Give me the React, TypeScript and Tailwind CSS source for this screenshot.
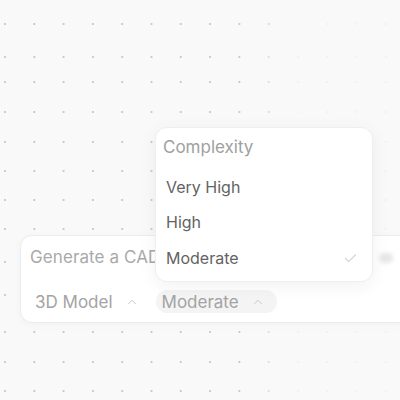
import React from "react";
import { ChevronUp, Check } from "lucide-react";

const rows = [24, 57, 82, 112, 142, 171, 200, 229, 262, 295, 332, 362, 391];
const cols = Array.from({ length: 14 }, (_, i) => 5 + i * 29.3);

function Dots() {
  return (
    <svg className="absolute inset-0" width="400" height="400" viewBox="0 0 400 400">
      {rows.map((y) =>
        cols.map((x) => {
          const op = x < 250 ? 1 : Math.max(0.15, 1 - (x - 250) / 45);
          return <circle key={`${x}-${y}`} cx={x} cy={y} r="1.1" fill="#c4c4c4" opacity={op} />;
        })
      )}
    </svg>
  );
}

export default function App() {
  const font = { fontFamily: "Inter, 'Noto Sans', sans-serif" };
  return (
    <div className="relative w-[400px] h-[400px] overflow-hidden bg-[#f9f9f9]" style={font}>
      <Dots />
      <div className="relative pt-[235px] pl-[20px]">
        <div className="w-[420px] h-[88px] rounded-[12px] bg-white border border-[#ececec] shadow-[0_2px_8px_rgba(0,0,0,0.03)] flex flex-col">
          <div className="flex pl-[9px] pt-[10px] h-[32px]">
            <span className="text-[17px] leading-[22px] text-[#a9a9a9] tracking-[0.1px]">Generate a CAD model</span>
            <span className="ml-auto mr-[46px] mt-[7px] w-[14px] h-[10px] rounded-full bg-[#e6e6e6] blur-[2px]" />
          </div>
          <div className="flex items-center gap-[11px] pl-[8px] mt-[22px]">
            <div className="flex items-center gap-[12px] px-[6px] h-[22px]">
              <span className="text-[17px] leading-[22px] text-[#a3a3a3]">3D Model</span>
              <ChevronUp size={14} strokeWidth={1.6} className="text-[#c4c4c4]" />
            </div>
            <div className="flex items-center gap-[12px] pl-[6px] pr-[12px] h-[23px] rounded-full bg-[#f4f4f4]">
              <span className="text-[17px] leading-[22px] text-[#a3a3a3]">Moderate</span>
              <ChevronUp size={14} strokeWidth={1.6} className="text-[#c4c4c4]" />
            </div>
          </div>
        </div>
      </div>
      <div className="absolute left-[155px] top-[127px] w-[218px] h-[155px] rounded-[12px] bg-white border border-[#efefef] shadow-[0_4px_18px_rgba(0,0,0,0.06)] flex flex-col pt-[8px]">
        <div className="pl-[7px] text-[17px] leading-[22px] text-[#a0a0a0] mb-[11px]">Complexity</div>
        <div className="h-[35px] flex items-center pl-[10px] text-[16px] text-[#636363]">Very High</div>
        <div className="h-[35px] flex items-center pl-[10px] text-[16px] text-[#636363]">High</div>
        <div className="h-[38px] flex items-center pl-[10px] pr-[14px] text-[16px] text-[#636363]">
          <span>Moderate</span>
          <Check size={15} strokeWidth={2} className="ml-auto text-[#d6d6d6] blur-[0.7px]" />
        </div>
      </div>
    </div>
  );
}
